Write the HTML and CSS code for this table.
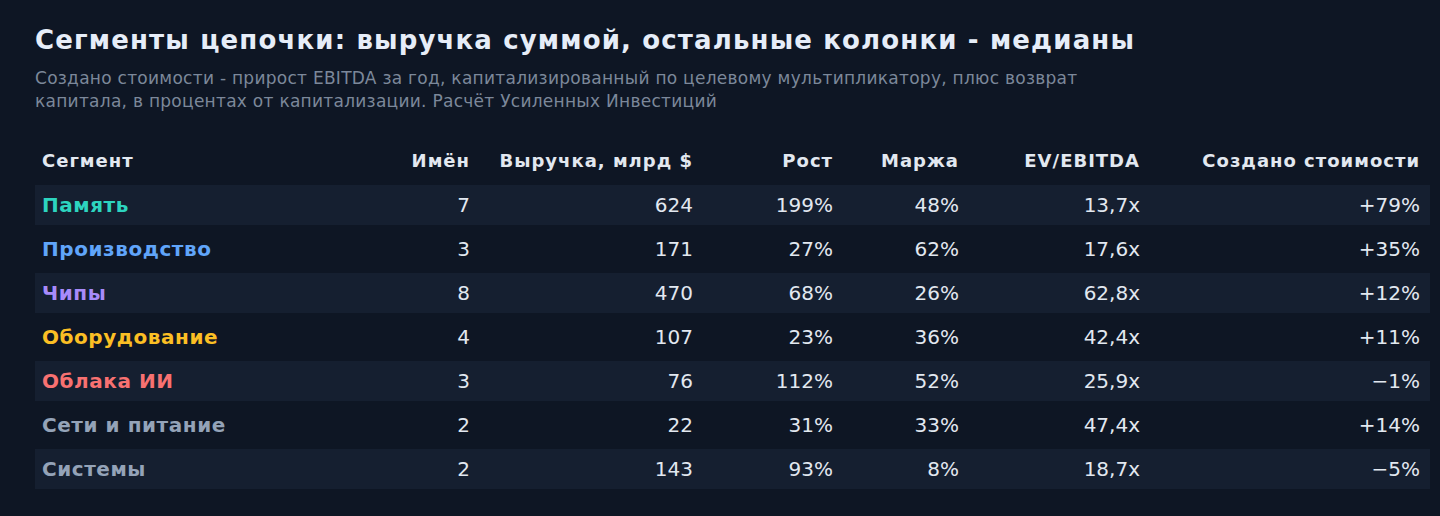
FILE: index.html
```html
<!DOCTYPE html>
<html lang="ru">
<head>
<meta charset="utf-8">
<title>Сегменты цепочки</title>
<link rel="stylesheet" href="styles.css">
</head>
<body>
<main class="page">
  <h1 class="title">Сегменты цепочки: выручка суммой, остальные колонки - медианы</h1>
  <p class="subtitle">Создано стоимости - прирост EBITDA за год, капитализированный по целевому мультипликатору, плюс возврат капитала, в процентах от капитализации. Расчёт Усиленных Инвестиций</p>
  <table class="seg-table">
    <colgroup>
      <col class="c-seg">
      <col class="c-names">
      <col class="c-rev">
      <col class="c-growth">
      <col class="c-margin">
      <col class="c-ev">
      <col class="c-value">
    </colgroup>
    <thead>
      <tr>
        <th class="left">Сегмент</th>
        <th>Имён</th>
        <th>Выручка, млрд $</th>
        <th>Рост</th>
        <th>Маржа</th>
        <th>EV/EBITDA</th>
        <th>Создано стоимости</th>
      </tr>
    </thead>
    <tbody>
      <tr class="striped">
        <td class="seg seg-teal">Память</td><td>7</td><td>624</td><td>199%</td><td>48%</td><td>13,7x</td><td>+79%</td>
      </tr>
      <tr>
        <td class="seg seg-blue">Производство</td><td>3</td><td>171</td><td>27%</td><td>62%</td><td>17,6x</td><td>+35%</td>
      </tr>
      <tr class="striped">
        <td class="seg seg-purple">Чипы</td><td>8</td><td>470</td><td>68%</td><td>26%</td><td>62,8x</td><td>+12%</td>
      </tr>
      <tr>
        <td class="seg seg-yellow">Оборудование</td><td>4</td><td>107</td><td>23%</td><td>36%</td><td>42,4x</td><td>+11%</td>
      </tr>
      <tr class="striped">
        <td class="seg seg-red">Облака ИИ</td><td>3</td><td>76</td><td>112%</td><td>52%</td><td>25,9x</td><td>−1%</td>
      </tr>
      <tr>
        <td class="seg seg-grey">Сети и питание</td><td>2</td><td>22</td><td>31%</td><td>33%</td><td>47,4x</td><td>+14%</td>
      </tr>
      <tr class="striped">
        <td class="seg seg-grey">Системы</td><td>2</td><td>143</td><td>93%</td><td>8%</td><td>18,7x</td><td>−5%</td>
      </tr>
    </tbody>
  </table>
</main>
</body>
</html>
```
FILE: styles.css
```css
html, body {
  margin: 0;
  padding: 0;
  background: #0e1624;
}

body {
  font-family: "DejaVu Sans", "Noto Sans", sans-serif;
  color: #e2e8f0;
}

.page {
  padding: 25px 10px 0 35px;
}

.title {
  margin: 0;
  font-size: 26px;
  line-height: 31px;
  font-weight: bold;
  letter-spacing: 1.15px;
  color: #e6edf8;
}

.subtitle {
  margin: 11px 0 0 0;
  max-width: 1070px;
  font-size: 17px;
  line-height: 23px;
  letter-spacing: 0.27px;
  color: #7c889a;
}

.seg-table {
  margin-top: 23px;
  width: 100%;
  table-layout: fixed;
  border-collapse: separate;
  border-spacing: 0 4px;
}

.c-seg { width: 365px; }
.c-names { width: 80px; }
.c-rev { width: 223px; }
.c-growth { width: 140px; }
.c-margin { width: 126px; }
.c-ev { width: 181px; }
.c-value { width: 280px; }

.seg-table th {
  height: 41px;
  padding: 0 10px 0 7px;
  font-size: 18px;
  font-weight: bold;
  letter-spacing: 1px;
  text-align: right;
  color: #e2e8f0;
  white-space: nowrap;
}

.seg-table th.left {
  text-align: left;
}

.seg-table td {
  height: 40px;
  padding: 0 10px 0 7px;
  font-size: 20px;
  text-align: right;
  color: #e2e8f0;
  white-space: nowrap;
}

.seg-table tr.striped td {
  background: #151f30;
}

.seg-table td.seg {
  text-align: left;
  font-weight: bold;
  letter-spacing: 0.55px;
}

.seg-teal { color: #2dd4bf !important; }
.seg-blue { color: #60a5fa !important; }
.seg-purple { color: #a78bfa !important; }
.seg-yellow { color: #fbbf24 !important; }
.seg-red { color: #f87171 !important; }
.seg-grey { color: #94a3b8 !important; }
```
